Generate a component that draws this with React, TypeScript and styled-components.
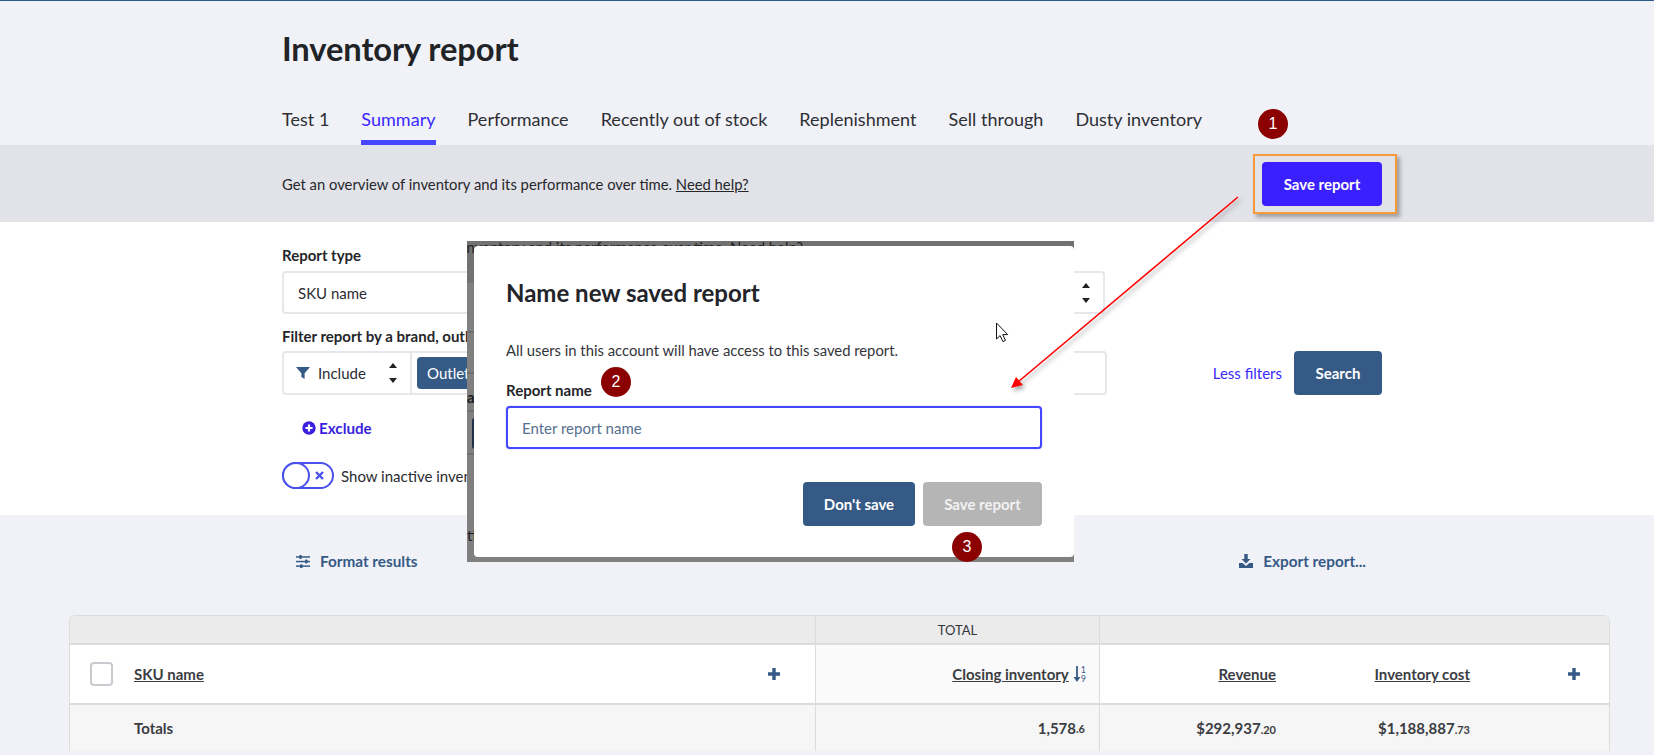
import React from "react";
import styled, { createGlobalStyle } from "styled-components";

const Global = createGlobalStyle`
  html, body { margin: 0; padding: 0; height: 755px; overflow: hidden; background: #f0f2f7; }
  body { font-family: Lato, "Liberation Sans", sans-serif; color: #2b2b30; }
  * { box-sizing: border-box; }
`;

const Page = styled.div`
  position: relative; width: 1654px; height: 755px; overflow: hidden;
  border-top: 1px solid #2f5a8f; background: #f0f2f7;
`;
const Header = styled.header`
  height: 144px; padding: 26px 0 0 282px; display: flex; flex-direction: column;
`;
const Title = styled.h1`
  margin: 0; font-size: 32.7px; line-height: 44px; font-weight: 700; color: #222327;
  letter-spacing: -0.1px; height: 77px;
`;
const Tabs = styled.nav`
  display: flex; gap: 32px; height: 41px; letter-spacing: 0.02px;
`;
const Tab = styled.a<{ $active?: boolean }>`
  font-size: 18px; line-height: 24px; padding-top: 3px; height: 41px;
  color: ${p => (p.$active ? "#3a28ff" : "#2e2f35")};
  border-bottom: 5px solid ${p => (p.$active ? "#4646ff" : "transparent")};
`;
const Band = styled.div`
  height: 77px; background: #e2e3e8; padding: 0 272px 0 282px;
  display: flex; align-items: center; justify-content: space-between;
`;
const BandText = styled.p`
  margin: 0; color: #26272b; font-size: 14.8px;
`;
const Help = styled.a` text-decoration: underline; `;
const Btn = styled.button<{ $kind?: "primary" | "steel" | "off" }>`
  height: 44px; border: 0; border-radius: 4px; font: 700 15px Lato, sans-serif;
  background: ${p => (p.$kind === "primary" ? "#3a1fff" : p.$kind === "off" ? "#b5b5b5" : "#365a86")};
  color: ${p => (p.$kind === "off" ? "#f2f2f2" : "#fff")};
`;
const SaveBtn = styled(Btn)` width: 120px; `;
const SearchBtn = styled(Btn)` width: 88px; `;
const CancelBtn = styled(Btn)` width: 112px; `;
const ConfirmBtn = styled(Btn)` width: 119px; `;

const FormSection = styled.section`
  height: 293px; background: #fff; padding: 23px 0 0 282px; display: flex; flex-direction: column;
`;
const Label = styled.label`
  display: block; font-size: 15px; line-height: 20px; font-weight: 700; color: #25262a;
`;
const Select = styled.div`
  width: 823px; height: 43px; margin-top: 6px; border: 2px solid #e6e7ea; border-radius: 4px;
  padding: 0 13px 0 14px; display: flex; align-items: center; justify-content: space-between;
  font-size: 15px; color: #2b2b30;
`;
const FilterLabel = styled(Label)` margin-top: 12px; `;
const FilterRow = styled.div`
  width: 1100px; margin-top: 5px; display: flex; align-items: center;
`;
const FilterField = styled.div`
  width: 825px; height: 44px; border: 2px solid #e6e7ea; border-radius: 4px; display: flex; align-items: center;
`;
const IncludeSeg = styled.div`
  width: 128px; height: 40px; padding: 0 13px 0 12px; display: flex; align-items: center;
  border-right: 2px solid #e6e7ea; font-size: 15px; color: #2b2b30;
`;
const IncludeText = styled.span` margin-left: 8px; flex: 1; `;
const Chip = styled.span`
  margin-left: 5px; height: 32px; padding: 0 10px; border-radius: 4px; background: #365a86; color: #fff;
  font-size: 15px; display: flex; align-items: center;
`;
const LessFilters = styled.a`
  margin-left: auto; margin-right: 12px; font-size: 15px; color: #3a28ff;
`;
const ExcludeRow = styled.a`
  margin: 23px 0 0 20px; display: flex; align-items: center; gap: 3px; font-size: 15.2px; font-weight: 700;
  color: #3a1fe0; height: 20px;
`;
const ToggleRow = styled.div`
  margin-top: 24px; display: flex; align-items: center; gap: 7px; font-size: 15px; color: #2b2b30;
`;
const Toggle = styled.span`
  position: relative; width: 52px; height: 27px; border: 2px solid #4a50ec; border-radius: 14px; display: block;
`;
const Knob = styled.span`
  position: absolute; left: -2px; top: -2px; width: 28px; height: 27px; border: 2px solid #4a50ec;
  border-radius: 50%; background: #fff;
`;
const ToggleMark = styled.svg`
  position: absolute; right: 8px; top: 7px; width: 9px; height: 9px;
`;

const Toolbar = styled.div`
  height: 100px; padding: 35px 288px 0 296px; display: flex; justify-content: space-between; align-items: flex-start;
`;
const ToolLink = styled.a`
  display: flex; align-items: center; gap: 10px; font-size: 15.3px; font-weight: 700; color: #365a86; line-height: 22px;
`;

const Table = styled.div`
  width: 1541px; margin-left: 69px; border: 1px solid #dcdcdc; border-bottom: 0; border-radius: 6px 6px 0 0;
  background: #fff; overflow: hidden;
`;
const Row = styled.div`
  display: grid; grid-template-columns: 745px 285px 1fr;
`;
const BandRow = styled(Row)`
  height: 29px; background: #ebebeb; border-bottom: 2px solid #dcdcdc;
`;
const HeadRow = styled(Row)`
  height: 60px; border-bottom: 2px solid #dcdcdc;
`;
const TotalRow = styled(Row)`
  height: 46px; background: #f6f6f6; font-weight: 700; font-size: 15px; color: #3b3d42;
`;
const Cell = styled.div<{ $mid?: boolean; $right?: boolean }>`
  display: flex; align-items: center; padding: 0 21px 0 20px;
  justify-content: ${p => (p.$right ? "flex-end" : "flex-start")};
  ${p => (p.$mid ? "border-left: 1px solid #dcdcdc; border-right: 1px solid #dcdcdc;" : "")}
`;
const TotalCaption = styled(Cell)`
  justify-content: center; font-size: 13px; color: #33353a; padding: 0;
`;
const SortCell = styled(Cell)` background: #fafafa; padding-right: 13px; `;
const ValueCell = styled(Cell)` padding-right: 14px; `;
const Check = styled.span`
  width: 23px; height: 24px; border: 2px solid #c9cacf; border-radius: 4px; margin-right: 21px;
`;
const TotalsName = styled.span` margin-left: 44px; `;
const ColLink = styled.a`
  font-size: 15px; font-weight: 700; color: #3b3d42; text-decoration: underline;
`;
const Plus = styled.span<{ $left: number }>`
  margin-left: ${p => p.$left}px; display: flex;
`;
const Metric = styled.div`
  display: grid; grid-template-columns: 156px 194px 110px; justify-items: end; align-items: center; width: 100%; font-size: 15px;
`;
const Cents = styled.small` font-size: 11px; font-weight: 700; `;
const SortGlyph = styled.span`
  display: inline-flex; align-items: center; margin-left: 4px; color: #365a86;
`;
const SortDigits = styled.span`
  display: flex; flex-direction: column; font-size: 9px; line-height: 9px; color: #365a86;
`;

const Overlay = styled.div`
  position: absolute; left: 467px; top: 240px; width: 607px; height: 321px;
  background: linear-gradient(#727272 0 42px, #808080 42px);
  padding: 5px 0 5px 7px; display: flex; overflow: hidden;
`;
const Ghost = styled.span`
  position: absolute; left: -4px; top: -4px; font-size: 14.8px; line-height: 20px; white-space: nowrap; color: #222;
`;
const GhostLine = styled.span<{ $top: number }>`
  position: absolute; left: 0; top: ${p => p.$top}px; font-size: 15px; line-height: 20px; color: #1c1c1f;
`;
const GhostLetter = styled(GhostLine)` font-weight: 700; `;
const GhostRule = styled.span<{ $top: number }>`
  position: absolute; left: 0; top: ${p => p.$top}px; width: 7px; height: 2px; background: #707070;
`;
const GhostBlock = styled.span`
  position: absolute; left: 5px; top: 177px; width: 3px; height: 31px; background: #1f3049; border-radius: 3px 0 0 3px;
`;
const Dialog = styled.div`
  position: relative; flex: 1; background: #fff; border-radius: 4px; padding: 32px 32px 0 32px; display: flex; flex-direction: column;
`;
const DialogTitle = styled.h2`
  margin: 0; font-size: 24px; line-height: 30px; font-weight: 700; color: #23242a;
`;
const DialogText = styled.p`
  margin: 32px 0 0; font-size: 14.8px; line-height: 20px; color: #33343a;
`;
const NameLabel = styled(Label)` margin-top: 20px; `;
const NameInput = styled.div`
  margin-top: 6px; height: 43px; border: 2px solid #4347ff; border-radius: 4px; padding-left: 14px;
  box-shadow: 0 0 1px #4347ff;
  display: flex; align-items: center; font-size: 15px; color: #56708f;
`;
const Actions = styled.div`
  margin-top: 33px; display: flex; justify-content: flex-end; gap: 8px;
`;
const Marker = styled.span<{ $x: number; $y: number }>`
  position: absolute; left: ${p => p.$x - 15}px; top: ${p => p.$y - 15}px; width: 30px; height: 30px; border-radius: 50%;
  background: #8b0000; color: #fff; display: flex; align-items: center; justify-content: center;
  font: 16px "Liberation Sans", sans-serif; z-index: 5;
`;
const Callout = styled.span`
  position: absolute; left: 1253px; top: 153px; width: 144px; height: 60px; border: 2px solid #f79a3a;
  box-shadow: 3px 3px 4px rgba(70,70,70,.45); z-index: 4;
`;
const ArrowLayer = styled.svg`
  position: absolute; left: 0; top: 0; width: 1654px; height: 755px; pointer-events: none; z-index: 4;
`;

const UpDown = () => (
  <svg width="8" height="20" viewBox="0 0 8 20">
    <path d="M4 0 8 5H0z" fill="#222" />
    <path d="M0 15h8l-4 5z" fill="#222" />
  </svg>
);
const Funnel = () => (
  <svg width="14" height="14" viewBox="0 0 14 14"><path d="M0 1h14L8.6 7.2V13L5.4 11V7.2z" fill="#365a86" /></svg>
);
const PlusCircle = () => (
  <svg width="14" height="14" viewBox="0 0 14 14"><circle cx="7" cy="7" r="6.7" fill="#3a1fe0" /><path d="M7 3.4v7.2M3.4 7h7.2" stroke="#fff" strokeWidth="2.2" /></svg>
);
const Sliders = () => (
  <svg width="14" height="13" viewBox="0 0 14 13" fill="#365a86">
    <rect y="1.2" width="14" height="1.5" /><rect y="5.8" width="14" height="1.5" /><rect y="10.4" width="14" height="1.5" />
    <rect x="3.2" y="0" width="2.6" height="4" rx="1" /><rect x="9" y="4.6" width="2.6" height="4" rx="1" /><rect x="4" y="9.2" width="2.6" height="4" rx="1" />
  </svg>
);
const Download = () => (
  <svg width="14" height="14" viewBox="0 0 14 14" fill="#365a86">
    <path d="M5.3 0h3.4v5h2.8L7 9.6 2.5 5h2.8z" /><path d="M0 9h3.6L7 12l3.4-3H14v5H0z" />
  </svg>
);
const PlusMark = () => (
  <svg width="12" height="12" viewBox="0 0 12 12"><path d="M6 0v12M0 6h12" stroke="#365a86" strokeWidth="3.4" /></svg>
);
const SortArrow = () => (
  <svg width="8" height="16" viewBox="0 0 8 16"><path d="M4 0v13" stroke="#365a86" strokeWidth="1.8" /><path d="M.6 11h6.8L4 16z" fill="#365a86" /></svg>
);

export default function App() {
  return (
    <Page>
      <Global />
      <Header>
        <Title>Inventory report</Title>
        <Tabs>
          <Tab>Test 1</Tab>
          <Tab $active>Summary</Tab>
          <Tab>Performance</Tab>
          <Tab>Recently out of stock</Tab>
          <Tab>Replenishment</Tab>
          <Tab>Sell through</Tab>
          <Tab>Dusty inventory</Tab>
        </Tabs>
      </Header>
      <Band>
        <BandText>Get an overview of inventory and its performance over time. <Help>Need help?</Help></BandText>
        <SaveBtn $kind="primary">Save report</SaveBtn>
      </Band>
      <FormSection>
        <Label>Report type</Label>
        <Select>SKU name <UpDown /></Select>
        <FilterLabel>Filter report by a brand, outlet or product</FilterLabel>
        <FilterRow>
          <FilterField>
            <IncludeSeg><Funnel /><IncludeText>Include</IncludeText><UpDown /></IncludeSeg>
            <Chip>Outlet</Chip>
          </FilterField>
          <LessFilters>Less filters</LessFilters>
          <SearchBtn>Search</SearchBtn>
        </FilterRow>
        <ExcludeRow><PlusCircle /> Exclude</ExcludeRow>
        <ToggleRow>
          <Toggle>
            <Knob />
            <ToggleMark viewBox="0 0 9 9"><path d="M1 1l7 7M8 1 1 8" stroke="#4a50ec" strokeWidth="2.4" /></ToggleMark>
          </Toggle>
          Show inactive inventory
        </ToggleRow>
      </FormSection>
      <Toolbar>
        <ToolLink><Sliders /> Format results</ToolLink>
        <ToolLink><Download /> Export report...</ToolLink>
      </Toolbar>
      <Table>
        <BandRow>
          <Cell />
          <TotalCaption $mid>TOTAL</TotalCaption>
          <Cell />
        </BandRow>
        <HeadRow>
          <Cell>
            <Check />
            <ColLink>SKU name</ColLink>
            <Plus $left={564}><PlusMark /></Plus>
          </Cell>
          <SortCell $mid $right>
            <ColLink>Closing inventory</ColLink>
            <SortGlyph><SortArrow /><SortDigits><span>1</span><span>9</span></SortDigits></SortGlyph>
          </SortCell>
          <ValueCell>
            <Metric>
              <ColLink>Revenue</ColLink>
              <ColLink>Inventory cost</ColLink>
              <PlusMark />
            </Metric>
          </ValueCell>
        </HeadRow>
        <TotalRow>
          <Cell><TotalsName>Totals</TotalsName></Cell>
          <ValueCell $mid $right>1,578<Cents>.6</Cents></ValueCell>
          <ValueCell>
            <Metric>
              <span>$292,937<Cents>.20</Cents></span>
              <span>$1,188,887<Cents>.73</Cents></span>
            </Metric>
          </ValueCell>
        </TotalRow>
      </Table>

      <Overlay>
        <Ghost>inventory and its performance over time. Need help?</Ghost>
        <GhostRule $top={90} />
        <GhostRule $top={131} />
        <GhostLetter $top={146}>a</GhostLetter>
        <GhostRule $top={169} />
        <GhostBlock />
        <GhostRule $top={212} />
        <GhostLine $top={284}>ti</GhostLine>
        <Dialog>
          <DialogTitle>Name new saved report</DialogTitle>
          <DialogText>All users in this account will have access to this saved report.</DialogText>
          <NameLabel>Report name</NameLabel>
          <NameInput>Enter report name</NameInput>
          <Actions>
            <CancelBtn>Don't save</CancelBtn>
            <ConfirmBtn $kind="off">Save report</ConfirmBtn>
          </Actions>
        </Dialog>
      </Overlay>

      <Callout />
      <Marker $x={1273} $y={123}>1</Marker>
      <Marker $x={616} $y={381}>2</Marker>
      <Marker $x={967} $y={546}>3</Marker>
      <ArrowLayer viewBox="0 0 1654 755">
        <defs>
          <filter id="sh" x="-10%" y="-10%" width="120%" height="120%">
            <feDropShadow dx="2" dy="3" stdDeviation="2" floodColor="#555" floodOpacity="0.55" />
          </filter>
        </defs>
        <g filter="url(#sh)">
          <path d="M1238 196 1018 381" stroke="#f00" strokeWidth="1.6" fill="none" />
          <path d="M1011 387 1016 376 1023 384z" fill="#f00" />
        </g>
        <path d="M996.5 322v16l3.6-3.4 2.8 6 2.6-1.2-2.8-5.8h5z" fill="#fff" stroke="#111" strokeWidth="1" />
      </ArrowLayer>
    </Page>
  );
}
